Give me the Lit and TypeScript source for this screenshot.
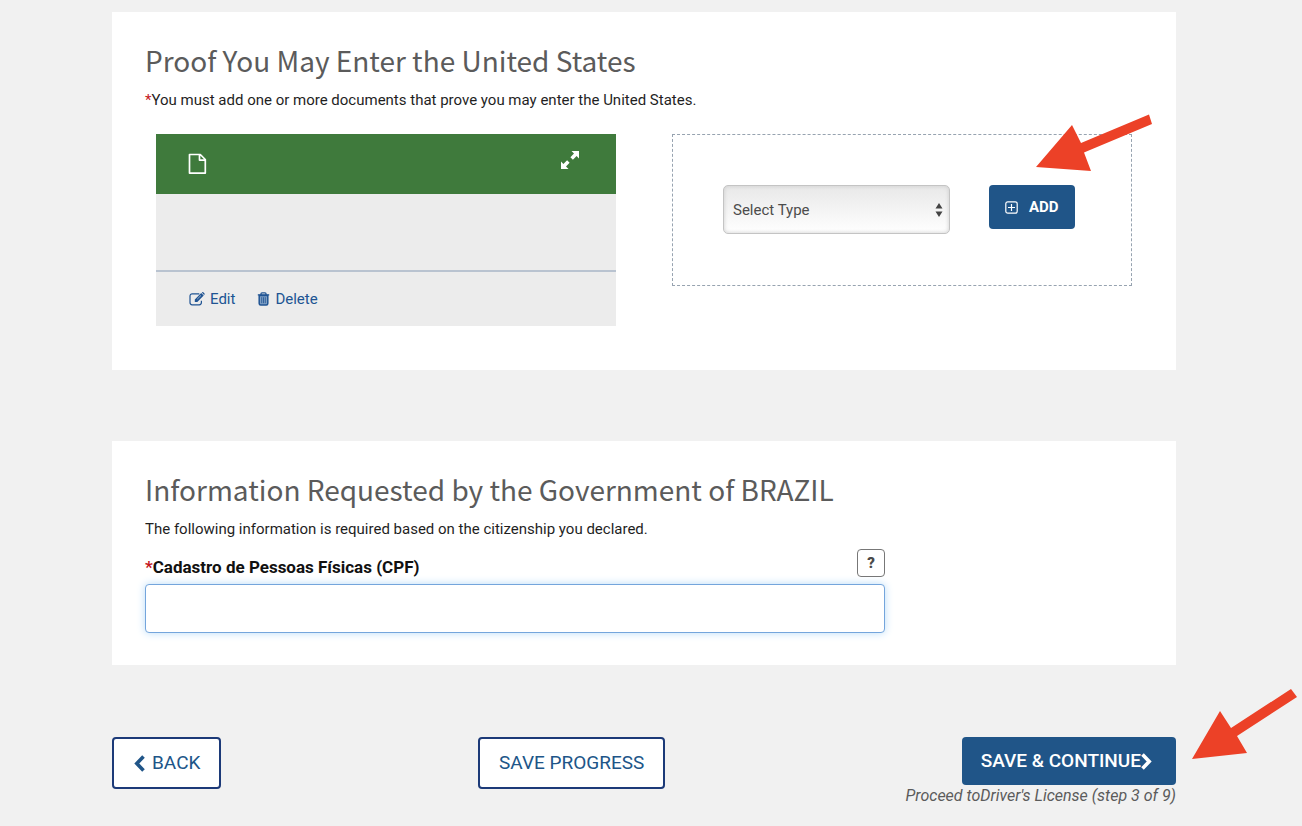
import { LitElement, html, css, svg } from "lit";
import { customElement } from "lit/decorators.js";

@customElement("app-root")
export class AppRoot extends LitElement {
  static styles = css`
    :host {
      display: block;
      min-height: 100vh;
      box-sizing: border-box;
      background: #f1f1f1;
      color: #1f1f1f;
      font-family: Roboto, "Liberation Sans", sans-serif;
      font-size: 15px;
      line-height: 20px;
    }
    * {
      box-sizing: border-box;
    }
    main {
      padding: 12px 126px 20px 112px;
    }
    .panel {
      background: #fff;
      padding: 30px 33px 0;
    }
    .proof {
      padding-bottom: 44px;
      margin-bottom: 71px;
    }
    .request {
      padding-bottom: 32px;
      margin-bottom: 72px;
    }
    h2 {
      margin: 0 0 12px;
      font-family: "Noto Sans CJK SC", "Open Sans", sans-serif;
      font-weight: 400;
      font-size: 28px;
      line-height: 36px;
      color: #5b5b5b;
    }
    p {
      margin: 0;
    }
    .req {
      color: #c4161c;
    }
    .docs {
      display: grid;
      grid-template-columns: 1fr 1fr;
      gap: 56px;
      align-items: start;
      padding: 0 11px;
      margin-top: 24px;
    }
    .doc {
      background: #ececec;
    }
    .doc-head {
      display: flex;
      justify-content: space-between;
      align-items: flex-start;
      height: 60px;
      padding: 16px 36px 0 32px;
      background: #3f7a3c;
      color: #fff;
    }
    .doc-body {
      height: 78px;
      border-bottom: 2px solid #b9c3d0;
    }
    .doc-actions {
      display: flex;
      gap: 22px;
      padding: 17px 33px;
    }
    a {
      display: flex;
      align-items: center;
      gap: 5px;
      color: #205493;
      text-decoration: none;
    }
    svg {
      display: block;
      flex: none;
    }
    button {
      font: inherit;
      cursor: pointer;
    }
    .icon-btn {
      background: none;
      border: 0;
      padding: 0;
      color: inherit;
    }
    .adder {
      position: relative;
      display: flex;
      align-items: flex-start;
      gap: 39px;
      height: 152px;
      padding: 50px 0 0 50px;
      border: 1px dashed #97a3b0;
    }
    .select {
      display: grid;
      align-items: center;
      width: 227px;
    }
    .select > * {
      grid-area: 1 / 1;
    }
    .select svg {
      justify-self: end;
      margin-right: 7px;
      pointer-events: none;
    }
    select {
      appearance: none;
      width: 100%;
      height: 49px;
      padding: 0 24px 0 9px;
      border: 1px solid #c4c4c4;
      border-radius: 5px;
      background: linear-gradient(#e8e8e8, #fff);
      box-shadow: inset 0 0 4px #cccccc;
      font: inherit;
      color: #4c4c4c;
    }
    .primary {
      display: flex;
      align-items: center;
      background: #205588;
      color: #fff;
      border: 0;
      border-radius: 4px;
      font-weight: 500;
    }
    .add {
      height: 44px;
      gap: 11px;
      padding: 0 16px;
      font-size: 15px;
      font-weight: 700;
    }
    .arrow {
      position: absolute;
      pointer-events: none;
    }
    .arrow-add {
      top: -21px;
      right: -21px;
    }
    .arrow-save {
      top: -48px;
      left: 100%;
      margin-left: 16px;
    }
    .field {
      max-width: 740px;
      margin-top: 10px;
    }
    .field-top {
      display: flex;
      justify-content: space-between;
      align-items: center;
      margin-bottom: 7px;
    }
    label {
      font-weight: 700;
      font-size: 17px;
      color: #111;
      padding-top: 8px;
    }
    .help {
      width: 28px;
      height: 28px;
      padding: 0;
      border: 1px solid #777;
      border-radius: 4px;
      background: #fff;
      color: #4a4a4a;
      font-weight: 900;
    }
    input {
      display: block;
      width: 100%;
      height: 49px;
      padding: 0 12px;
      border: 1px solid #74a5dc;
      border-radius: 4px;
      box-shadow: 0 0 8px #b9dcf8;
      font: inherit;
      outline: none;
    }
    footer {
      display: grid;
      grid-template-columns: 34.4% 1fr auto;
      align-items: start;
      justify-items: start;
    }
    .plain {
      display: flex;
      align-items: center;
      gap: 7px;
      height: 52px;
      padding: 0 19px;
      background: #fff;
      border: 2px solid #1c3a78;
      border-radius: 4px;
      color: #205588;
      font-size: 19px;
    }
    .next {
      position: relative;
      display: flex;
      flex-direction: column;
      align-items: flex-end;
    }
    .save {
      height: 48px;
      padding: 0 24px 0 19px;
      font-size: 19px;
    }
    .step {
      margin-top: 1px;
      font-size: 16px;
      font-style: italic;
      color: #5b5b5b;
      white-space: nowrap;
    }
  `;

  private arrow(cls: string, w: number, h: number, points: string) {
    return html`<svg class="arrow ${cls}" width=${w} height=${h} viewBox="0 0 ${w} ${h}" aria-hidden="true">
      ${svg`<polygon points=${points} fill="#ec4127"></polygon>`}
    </svg>`;
  }

  render() {
    return html`
      <main>
        <section class="panel proof">
          <h2>Proof You May Enter the United States</h2>
          <p><span class="req">*</span>You must add one or more documents that prove you may enter the United States.</p>
          <div class="docs">
            <article class="doc">
              <div class="doc-head">
                <svg width="19" height="27" viewBox="0 0 19 27" fill="none" stroke="#fff" stroke-width="1.7" stroke-linejoin="round" aria-hidden="true">
                  <path d="M1.5 4.5h10.8l5 5v13.6H1.5z M11.5 4.5v5.6h5.8"></path>
                </svg>
                <button class="icon-btn" aria-label="Expand">
                  <svg width="20" height="20" viewBox="0 0 20 20" fill="#fff">
                    <path d="M11.5 1H19v7.5l-2.4-2.4-3.7 3.7-2.5-2.5 3.6-3.7zM1 11.5l2.4 2.4 3.7-3.7 2.5 2.5L6 16.5l2.5 2.5H1z"></path>
                  </svg>
                </button>
              </div>
              <div class="doc-body"></div>
              <div class="doc-actions">
                <a href="#edit">
                  <svg width="16" height="14" viewBox="0 0 16 14" aria-hidden="true">
                    <path d="M10.3 1.8H3.2A2.2 2.2 0 0 0 1 4v6.6a2.2 2.2 0 0 0 2.2 2.2h7a2.2 2.2 0 0 0 2.2-2.2V8.7" fill="none" stroke="#205493" stroke-width="1.2"></path>
                    <path d="M5.8 7.4 12.2 1l2.5 2.5L8.3 9.9H5.8zM12.8.6l.5-.4q.5-.3 1 .1l1.2 1.2q.4.5 0 1l-.4.5z" fill="#205493"></path>
                    <path d="M8.2 7.2 12 3.4" stroke="#ececec" stroke-width=".6"></path>
                  </svg>
                  Edit
                </a>
                <a href="#delete">
                  <svg width="13" height="14" viewBox="0 0 13 14" aria-hidden="true">
                    <path d="M4 2.5V1.8Q4 .8 5 .8h3q1 0 1 1v.7M.8 2.9h11.4" fill="none" stroke="#205493" stroke-width="1.3"></path>
                    <path d="M2.2 3.5h8.6v8q0 1.5-1.5 1.5H3.7q-1.5 0-1.5-1.5z" fill="#7f9fc4" stroke="#205493" stroke-width="1.5"></path>
                    <path d="M4.7 5.2v6M6.5 5.2v6M8.3 5.2v6" stroke="#205493" stroke-width=".8"></path>
                  </svg>
                  Delete
                </a>
              </div>
            </article>
            <div class="adder">
              <div class="select">
                <select aria-label="Document type">
                  <option>Select Type</option>
                </select>
                <svg width="8" height="14" viewBox="0 0 8 14" fill="#444" aria-hidden="true">
                  <path d="M4 0l3.5 5.5h-7zM4 14l3.5-5.5h-7z"></path>
                </svg>
              </div>
              <button class="primary add">
                <svg width="13" height="13" viewBox="0 0 13 13" fill="none" stroke="#fff" stroke-width="1.2" aria-hidden="true">
                  <rect x=".8" y=".8" width="11.4" height="11.4" rx="2"></rect>
                  <path d="M6.5 3v7M3 6.5h7"></path>
                </svg>
                ADD
              </button>
              ${this.arrow("arrow-add", 116, 57, "0,53 36,11 45,29 113,0.5 116,10 48,38.5 55,57")}
            </div>
          </div>
        </section>

        <section class="panel request">
          <h2>Information Requested by the Government of BRAZIL</h2>
          <p>The following information is required based on the citizenship you declared.</p>
          <div class="field">
            <div class="field-top">
              <label for="cpf"><span class="req">*</span>Cadastro de Pessoas Físicas (CPF)</label>
              <button class="help" aria-label="Help">?</button>
            </div>
            <input id="cpf" type="text" />
          </div>
        </section>

        <footer>
          <button class="plain">
            <svg width="12" height="17" viewBox="0 0 12 17" fill="none" stroke="#205588" stroke-width="3.6" aria-hidden="true">
              <path d="M10.5 1.5 3.8 8.5l6.7 7"></path>
            </svg>
            BACK
          </button>
          <button class="plain">SAVE PROGRESS</button>
          <div class="next">
            <button class="primary save">
              SAVE &amp; CONTINUE
              <svg width="11" height="17" viewBox="0 0 11 17" fill="none" stroke="#fff" stroke-width="3.6" aria-hidden="true">
                <path d="M1.5 1.5l6.7 7-6.7 7"></path>
              </svg>
            </button>
            <p class="step">Proceed toDriver's License (step 3 of 9)</p>
            ${this.arrow("arrow-save", 105, 70, "0,70 28,22 39,39 99,0 105,8 45,47 55,64")}
          </div>
        </footer>
      </main>
    `;
  }
}
